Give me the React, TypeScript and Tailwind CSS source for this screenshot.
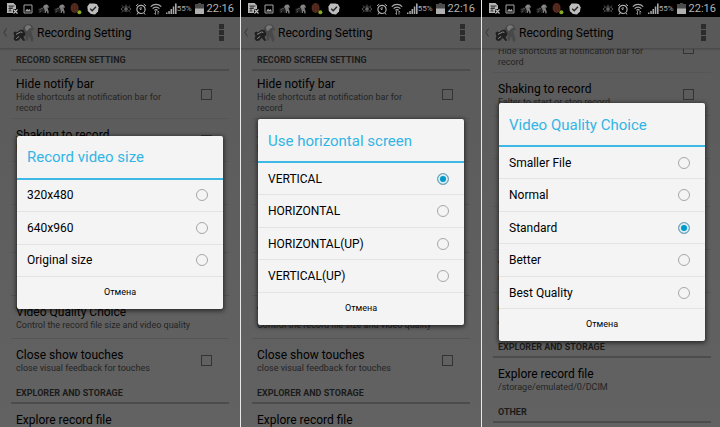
import { useId } from "react";
import clsx from "clsx";

interface PhoneProps {
  title: string;
  options: string[];
  selected?: string;
  scrolled?: boolean;
}

const screens: PhoneProps[] = [
  {
    title: "Record video size",
    options: ["320x480", "640x960", "Original size"],
  },
  {
    title: "Use horizontal screen",
    options: ["VERTICAL", "HORIZONTAL", "HORIZONTAL(UP)", "VERTICAL(UP)"],
    selected: "VERTICAL",
  },
  {
    title: "Video Quality Choice",
    options: ["Smaller File", "Normal", "Standard", "Better", "Best Quality"],
    selected: "Standard",
    scrolled: true,
  },
];

// Animal head and legs behind a camera on its left
function RecorderIcon({ className }: { className?: string }) {
  return (
    <svg viewBox="0 0 21 18" className={className} aria-hidden="true">
      <path
        d="M9.500 5 11 2.600 13 .8l3-.6 2.400.8 1.200 2L21 5l-.8 1.400-2-.4.6 3.600 1.600 4.400-.4 3.600h-2l-1-3.800-1.400-1.600-.6 4.400h-2.200l-.2-5-2.600-2z"
        fill="currentColor"
      />
      <path
        d="m12 3 2-1.800 3 .2 1.600 2.200-2.400 1-2.200 2.600-1.600-1.400z"
        fill="#8c8c8c"
        fillOpacity=".7"
      />
      <path
        d="M.4 9 2 7.600l2 .6 3.400-2.400 3 .2 2 3.400-.8 2.800-1.200.6 1.800 3.600-1.600.6-3-3.200-2.200 2.600-3 .6-1.800-2 .8-2.800z"
        fill="#202020"
      />
      <path
        d="m3 10.400 4.600-2.400 1.800.4M3.200 14.600l3-2.200"
        stroke="#8a8a8a"
        strokeWidth="1"
        fill="none"
      />
    </svg>
  );
}

function StatusBar() {
  return (
    <div className="flex h-[17px] shrink-0 items-center justify-between bg-black pr-[6px] pl-[7px] text-[#a9a9a9]">
      <div className="flex items-center gap-[5px]">
        <svg viewBox="0 0 11 11" className="size-[11px]" aria-hidden="true">
          <path d="M0 0h6.5L9 2.5V6H6v4H0z" fill="#b5b5b5" />
          <path
            d="M1.5 3h6M3 3v5M5 3v3M1.5 5.5h4M1.5 8h3"
            stroke="#222"
            strokeWidth=".8"
          />
          <path d="m6.5 6.5 4 4m0-4-4 4" stroke="#c4c4c4" strokeWidth="1.1" />
        </svg>
        <svg viewBox="0 0 10 10" className="size-[10px]" aria-hidden="true">
          <path d="M1 1h8v8H1z" fill="none" stroke="#a5a5a5" strokeWidth="1" />
          <path d="m2 7.5 2-2.8 1.4 1.4L6.6 5 8 7.5z" fill="#a5a5a5" />
        </svg>
        <RecorderIcon className="h-[10px] w-[11px] text-[#7c7c7c]" />
        <RecorderIcon className="h-[10px] w-[11px] text-[#7c7c7c]" />
        <svg viewBox="0 0 12 12" className="size-[12px]" aria-hidden="true">
          <ellipse cx="4.6" cy="5" rx="4" ry="5" fill="#572b1f" />
          <path
            d="M3 1.500c1 2 0 4 1 7M6 1c-.4 2 .6 4.500 0 6.500"
            stroke="#41200f"
            strokeWidth=".6"
            fill="none"
          />
          <circle cx="9.400" cy="9.200" r="2" fill="#86ad22" />
        </svg>
        <svg viewBox="0 0 12 12" className="size-[12px]" aria-hidden="true">
          <path
            d="M2.500.5h5L10 1.200l1.600 3-.6 4.400L8 11.600l-4-.6L.8 8 .4 3.500z"
            fill="#bdbdbd"
          />
          <path
            d="m3.200 5.800 2 2 3.800-4"
            stroke="#222"
            strokeWidth="1.300"
            fill="none"
          />
        </svg>
      </div>
      <div className="flex items-center gap-[3px]">
        <svg
          viewBox="0 0 12 10"
          className="h-[10px] w-[12px]"
          fill="none"
          stroke="#666"
          aria-hidden="true"
        >
          <path
            d="M1 5c2.500-3 7.500-3 10 0-2.500 3-7.500 3-10 0zM3 2.800 2 1.400M6 2V.5M9 2.800l1-1.400M2.600 7.200l-.8 1.200M9.400 7.200l.8 1.200"
            strokeWidth=".8"
          />
          <circle cx="6" cy="5" r="1.300" fill="#666" />
        </svg>
        <svg
          viewBox="0 0 12 12"
          className="size-[12px]"
          fill="none"
          stroke="#b0b0b0"
          aria-hidden="true"
        >
          <circle cx="6" cy="6.400" r="4.100" strokeWidth="1.200" />
          <path d="M6 4v2.700L4.400 5.600M1 3l2.200-2M11 3 8.800 1M3 10l-1 1.500M9 10l1 1.500" />
        </svg>
        <svg
          viewBox="0 0 12 12"
          className="size-[12px]"
          fill="none"
          stroke="#a9a9a9"
          aria-hidden="true"
        >
          <path
            d="M.8 3.600c3-3 7.400-3 10.400 0M2.600 5.600c2-2 4.800-2 6.800 0M4.400 7.400c1-1 2.200-1 3.200 0"
            strokeWidth="1.300"
          />
          <path
            d="M5.500 8v3.500M4.300 10.300l1.200 1.200M8 11.500V8M9.200 9.200 8 8"
            strokeWidth=".8"
          />
        </svg>
        <div className="flex items-center">
          <svg
            viewBox="0 0 12 11"
            className="h-[11px] w-[12px]"
            aria-hidden="true"
          >
            <path
              d="M1 11V9.500h1.500V11zM3.300 11V8h1.500v3zM5.500 11V6h1.600v5zM7.800 11V3.500h1.500V11zM10 11V.5h1.600V11z"
              fill="#a9a9a9"
            />
          </svg>
          <span className="text-[8px] leading-none">55%</span>
        </div>
        <svg viewBox="0 0 9 11" className="h-[11px] w-[9px]" aria-hidden="true">
          <path d="M3 0h3v1h3v10H0V1h3z" fill="#4b4b4b" />
          <path d="M0 5.500h9V11H0z" fill="#b0b0b0" />
        </svg>
        <time className="text-[11px] leading-none text-[#b4b4b4]">22:16</time>
      </div>
    </div>
  );
}

function ActionBar() {
  return (
    <header className="z-10 flex h-[32px] shrink-0 items-center border-b border-[#4b4b4b] bg-[#595959] pr-[16px] pl-[3px] shadow-[0_1px_1px_#00000018]">
      <button type="button" aria-label="Back" className="flex items-center">
        <svg viewBox="0 0 4 9" className="h-[9px] w-[4px]" aria-hidden="true">
          <path d="M3.500.5 1 4.500l2.500 4" fill="none" stroke="#353535" />
        </svg>
        <RecorderIcon className="ml-[6px] h-[18px] w-[21px] text-[#484848]" />
      </button>
      <h1 className="ml-[3px] grow text-[12px] text-black">
        Recording Setting
      </h1>
      <button type="button" aria-label="More options">
        <svg viewBox="0 0 5 17" className="h-[17px] w-[5px]" aria-hidden="true">
          <path d="M0 0h5v5H0zM0 6h5v5H0zM0 12h5v5H0z" fill="#2c2c2c" />
        </svg>
      </button>
    </header>
  );
}

function SectionTitle({ children }: { children: string }) {
  return (
    <h2 className="mx-[11px] flex h-[22px] items-center border-b-2 border-[#4c4c4c] px-[5px] pt-[4px] text-[9px] font-bold text-[#1b1b1b]">
      {children}
    </h2>
  );
}

interface SettingProps {
  name?: string;
  summary?: string;
  checkbox?: boolean;
  tall?: boolean;
  last?: boolean;
}

function Setting({ name, summary, checkbox, tall, last }: SettingProps) {
  const id = useId();

  return (
    <div
      className={clsx(
        "mx-[11px] flex items-center border-b pr-[17px] pl-[5px]",
        tall ? "h-[48px]" : "h-[43px]",
        last ? "border-transparent" : "border-[#565656]"
      )}
    >
      <label htmlFor={checkbox ? id : undefined} className="min-w-0 grow">
        <span className="block text-[12px] leading-[16px] text-black">
          {name}
        </span>
        <span className="block text-[9px] leading-[11px] text-[#242424]">
          {summary}
        </span>
      </label>
      {checkbox && (
        <input
          id={id}
          type="checkbox"
          className="ml-[24px] size-[11px] shrink-0 appearance-none border border-[#333]"
        />
      )}
    </div>
  );
}

function ChoiceDialog({ title, options, selected }: PhoneProps) {
  const id = useId();

  return (
    <div
      role="dialog"
      aria-labelledby={id}
      className="w-full rounded-[2px] bg-[#f4f4f4] text-black shadow-[0_1px_4px_1px_#00000090]"
    >
      <h2
        id={id}
        className="flex h-[44px] items-center border-b-2 border-[#40b8e6] px-[10px] pt-[2px] text-[15px] text-[#33b5e5]"
      >
        {title}
      </h2>
      {options.map((option) => (
        <label
          key={option}
          className="flex h-8 items-center justify-between border-b border-[#e3e3e3] pr-[15px] pl-[10px] text-[12px] odd:h-[33px]"
        >
          {option}
          <input
            type="radio"
            name={id}
            defaultChecked={option === selected}
            className="size-[12px] appearance-none rounded-full border border-[#a6a6a6] checked:border-[#7fa3b3] checked:bg-[#0099cc] checked:shadow-[inset_0_0_0_2px_#dcebf1]"
          />
        </label>
      ))}
      <button type="button" className="h-8 w-full text-[9px]">
        Отмена
      </button>
    </div>
  );
}

function Phone(props: PhoneProps) {
  return (
    <section className="relative flex h-screen min-w-0 flex-col overflow-hidden bg-linear-to-b from-[#5a5a5a] to-[#626262]">
      <StatusBar />
      <ActionBar />
      <main className="min-h-0 grow overflow-hidden">
        <div className={clsx(props.scrolled && "-mt-[46px]")}>
          <SectionTitle>RECORD SCREEN SETTING</SectionTitle>
          <Setting
            name="Hide notify bar"
            summary="Hide shortcuts at notification bar for record"
            checkbox
            tall
          />
          <Setting
            name="Shaking to record"
            summary="Falter to start or stop record"
            checkbox
          />
          <Setting />
          <Setting tall />
          <Setting />
          <Setting
            name="Video Quality Choice"
            summary="Control the record file size and video quality"
          />
          <Setting
            name="Close show touches"
            summary="close visual feedback for touches"
            checkbox
            last
          />
          <SectionTitle>EXPLORER AND STORAGE</SectionTitle>
          <Setting
            name="Explore record file"
            summary="/storage/emulated/0/DCIM"
            last
          />
          <SectionTitle>OTHER</SectionTitle>
        </div>
      </main>
      <div className="absolute inset-x-0 top-[17px] bottom-0 z-20 flex items-center px-[17px]">
        <ChoiceDialog {...props} />
      </div>
    </section>
  );
}

export default function App() {
  return (
    <div className="overflow-hidden bg-[#e8e8e8] font-[Roboto,sans-serif]">
      <div className="grid w-[calc(100%+2px)] grid-cols-3 gap-px">
        {screens.map((screen) => (
          <Phone key={screen.title} {...screen} />
        ))}
      </div>
    </div>
  );
}
